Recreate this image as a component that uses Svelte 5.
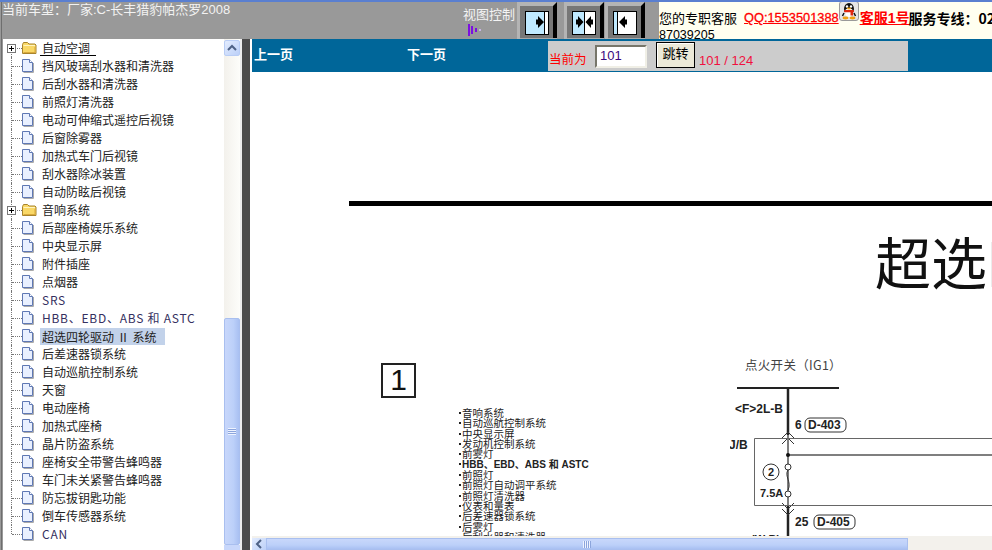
<script>
  const rows = [
    ['自动空调', 'folder'], ['挡风玻璃刮水器和清洗器'], ['后刮水器和清洗器'], ['前照灯清洗器'],
    ['电动可伸缩式遥控后视镜'], ['后窗除雾器'], ['加热式车门后视镜'], ['刮水器除冰装置'], ['自动防眩后视镜'],
    ['音响系统', 'folder'], ['后部座椅娱乐系统'], ['中央显示屏'], ['附件插座'], ['点烟器'], ['SRS', 'latin'],
    ['HBB、EBD、ABS 和 ASTC', 'latin'], ['超选四轮驱动 II 系统', 'selected'], ['后差速器锁系统'], ['自动巡航控制系统'],
    ['天窗'], ['电动座椅'], ['加热式座椅'], ['晶片防盗系统'], ['座椅安全带警告蜂鸣器'],
    ['车门未关紧警告蜂鸣器'], ['防忘拔钥匙功能'], ['倒车传感器系统'], ['CAN', 'latin']
  ];
  const list = ['音响系统', '自动巡航控制系统', '中央显示屏', '发动机控制系统', '前雾灯', 'HBB、EBD、ABS 和 ASTC', '前照灯', '前照灯自动调平系统', '前照灯清洗器', '仪表和量表', '后差速器锁系统', '后雾灯', '后刮水器和清洗器'];
</script>

{#snippet viewBtn(line, arrows)}
  <svg class="viewbtn" width="40" height="37" viewBox="0 0 40 37">
    <rect width="40" height="37" fill="#a8a8a8" />
    <polygon points="0,0 40,0 36,4 3,4 3,37 0,37" fill="#b4b4b4" />
    <rect x="3" y="4" width="33" height="32" fill="#777" />
    <polygon points="36,4 40,0 40,36 36,36" fill="#000" />
    <rect x="8.5" y="9.5" width="23" height="23" fill="#fff" stroke="#000" />
    <rect x="9" y="10" width={line - 9} height="22" fill="#bfe9ff" />
    <line x1={line + 0.5} y1="10" x2={line + 0.5} y2="32" stroke="#000" />
    {#each arrows as a}
      <polygon points={a} fill="#000" />
    {/each}
  </svg>
{/snippet}

<div class="app">
  <header class="top">
    <div class="model">当前车型：厂家:C-长丰猎豹帕杰罗2008</div>
    <div class="view">
      <div class="view-label">视图控制</div>
      <svg class="wave" width="18" height="14" viewBox="0 0 18 14">
        <rect x="1" y="1" width="2" height="12" fill="#7b10e0" />
        <rect x="4" y="3" width="2" height="8" fill="#7b10e0" />
        <rect x="8" y="5" width="2" height="4" fill="#7b10e0" />
        <rect x="12" y="6" width="2" height="2" fill="#c9b6e6" />
      </svg>
    </div>
    <div class="btns">
      {@render viewBtn(27, ['19,17.5 21,17.5 21,14 27,20 21,26 21,22.5 19,22.5'])}
      {@render viewBtn(20, ['12,17.5 14,17.5 14,14 19.5,20 14,26 14,22.5 12,22.5', '29,17.5 27,17.5 27,14 21.5,20 27,26 27,22.5 29,22.5'])}
      {@render viewBtn(12, ['22,17.5 20,17.5 20,14 14,20 20,26 20,22.5 22,22.5'])}
    </div>
    <div class="service">
      <div class="line"><span class="plain">您的专职客服</span><a class="qq" href="#qq">QQ:1553501388</a><svg class="penguin" width="20" height="20" viewBox="0 0 20 20">
        <rect x="0.5" y="0.5" width="19" height="19" rx="2.5" fill="#e6e6e6" stroke="#9a9a9a" />
        <ellipse cx="10" cy="8" rx="5" ry="6" fill="#111" />
        <ellipse cx="10" cy="11.5" rx="4" ry="4.5" fill="#fff" />
        <circle cx="8" cy="5.5" r="1.2" fill="#fff" />
        <circle cx="12" cy="5.5" r="1.2" fill="#fff" />
        <ellipse cx="10" cy="7.5" rx="2" ry="1" fill="#f0a010" />
        <rect x="5" y="9" width="10" height="2.2" rx="1" fill="#e02810" />
        <rect x="11.5" y="10.5" width="2.6" height="4" fill="#e02810" />
        <path d="M5 12 L3.5 15 M15 12 L16.5 15" stroke="#111" stroke-width="1.5" />
        <ellipse cx="6.5" cy="17" rx="3" ry="1.4" fill="#f0a010" />
        <ellipse cx="13.5" cy="17" rx="3" ry="1.4" fill="#f0a010" />
      </svg><a class="kefu" href="#kf">客服1号</a><b>服务专线：02</b></div>
      <div class="tel">87039205</div>
    </div>
  </header>

  <div class="body">
    <aside class="side">
      <div class="tree">
        {#each rows as [label, kind], i}
          <div class="row" class:last={i === rows.length - 1} class:first={i === 0}>
            {#if kind === 'folder'}
              <span class="plus"></span>
              <svg class="ico" width="16" height="14" viewBox="0 0 16 14">
                <path d="M.5 3.5 L1.5 1.5 H5.5 L7 3 H13 L14 4 V12.5 H.5 Z" fill="#f9d867" stroke="#a8842c" />
                <path d="M1.5 4.5 H13" stroke="#fff4c0" />
                <path d="M1.5 11.5 H13 V6" stroke="#d9a93c" fill="none" />
              </svg>
            {:else}
              <svg class="ico" width="16" height="14" viewBox="0 0 16 14">
                <path d="M.5 .5 H7.5 L10.5 3.5 V12.5 H.5 Z" fill="#e9f0ff" stroke="#5f78b4" />
                <path d="M7.5 .5 V3.5 H10.5" fill="#fff" stroke="#5f78b4" />
                <path d="M1.5 13.5 H11.5 V4" stroke="#aaa" fill="none" />
              </svg>
            {/if}
            <span class="label" class:sel={kind === 'selected'} class:latin={kind === 'latin'} class:open={i === 0}>{label}</span>
          </div>
        {/each}
      </div>
      <div class="vscroll">
        <div class="up">
          <svg width="12" height="8" viewBox="0 0 12 8"><path d="M2 6 L6 2 L10 6" stroke="#4d6185" stroke-width="2" fill="none" /></svg>
        </div>
        <div class="vtrack"></div>
        <div class="vthumb"><span class="grip"></span></div>
        <div class="down"></div>
      </div>
    </aside>
    <div class="split"></div>
    <main class="main">
      <div class="bar">
        <div class="nav">
          <a href="#prev">上一页</a>
          <a href="#next">下一页</a>
        </div>
        <div class="jump">
          <span class="cur">当前为</span>
          <input class="page" value="101" />
          <button class="go">跳转</button>
          <span class="count">101 / 124</span>
        </div>
      </div>
      <div class="doc">
        <div class="rule"></div>
        <div class="title">超选四轮驱动</div>
        <div class="one">1</div>
        <ul class="list">
          {#each list as t}
            <li class:hb={t.startsWith('HBB')}>{t}</li>
          {/each}
        </ul>
        <svg class="diagram" width="262" height="200" viewBox="0 0 262 200">
          <text x="15" y="20" class="t13">点火开关（IG1）</text>
          <line x1="7" y1="38" x2="109" y2="38" stroke="#222" stroke-width="2" />
          <line x1="58" y1="38" x2="58" y2="85" stroke="#222" stroke-width="2.5" />
          <line x1="58" y1="85" x2="58" y2="155" stroke="#555" stroke-width="1.5" />
          <line x1="58" y1="155" x2="58" y2="200" stroke="#222" stroke-width="2.5" />
          <text x="5" y="63" class="t12">&lt;F&gt;2L-B</text>
          <text x="65" y="79" class="t12">6</text>
          <rect x="75" y="68" width="41" height="14" rx="5" fill="none" stroke="#333" />
          <text x="78" y="79" class="t12">D-403</text>
          <path d="M52 88 L58 82 L64 88 M52 94 L58 88 L64 94 M52 153 L58 159 L64 153 M52 159 L58 165 L64 159" stroke="#333" fill="none" />
          <text x="-1" y="99" class="t12">J/B</text>
          <path d="M262 88.5 H24.5 V155.5 H262" stroke="#666" fill="none" />
          <line x1="58" y1="105" x2="262" y2="105" stroke="#555" stroke-width="1.5" />
          <circle cx="58" cy="105" r="2" fill="#111" />
          <circle cx="58" cy="117" r="3" fill="#fff" stroke="#333" />
          <path d="M58 120 C54 126 62 132 58 140" stroke="#333" fill="none" />
          <circle cx="58" cy="144" r="3" fill="#fff" stroke="#333" />
          <circle cx="41" cy="122" r="8" fill="none" stroke="#333" />
          <text x="38" y="126" class="t11">2</text>
          <text x="30" y="147" class="t11">7.5A</text>
          <text x="65" y="176" class="t12">25</text>
          <rect x="84" y="165" width="41" height="14" rx="5" fill="none" stroke="#333" />
          <text x="87" y="176" class="t12">D-405</text>
          <text x="21" y="193" class="t11">(W-B)</text>
        </svg>
      </div>
      <div class="hscroll">
        <div class="left">
          <svg width="8" height="10" viewBox="0 0 8 10"><path d="M6 1 L2 5 L6 9" stroke="#4d6185" stroke-width="2" fill="none" /></svg>
        </div>
        <div class="hthumb"><span class="hgrip"></span></div>
        <div class="htrack"></div>
      </div>
    </main>
  </div>
</div>

<style>
  :global(body) { margin: 0; background: #999; }
  .app {
    width: 992px;
    height: 550px;
    overflow: hidden;
    display: grid;
    grid-template-rows: 39px 1fr;
    font-family: "Noto Sans CJK SC", "Liberation Sans", sans-serif;
    font-size: 12px;
  }
  .top {
    display: flex;
    background: linear-gradient(90deg, #999 0 1px, #6e6e6e 1px 2px, #999 2px);
    border-top: 2px solid #5a7fd0;
    box-sizing: border-box;
    overflow: hidden;
    color: #fff;
  }
  .model {
    width: 461px;
    padding-left: 2px;
    font-size: 13px;
    line-height: 15px;
    color: #f2f2f2;
    font-family: "Liberation Sans", "Noto Sans CJK SC", sans-serif;
  }
  .view { width: 54px; padding-top: 3px; }
  .view-label { font-size: 13px; line-height: 17px; white-space: nowrap; color: #f4f4f4; }
  .wave { display: block; margin: 1px 0 0 4px; }
  .btns { display: flex; gap: 7px; width: 142px; }
  .viewbtn { display: block; flex: none; }
  .btns .viewbtn:last-child { margin-left: -6px; }
  .service {
    flex: 1;
    min-width: 0;
    background: #fffff0;
    color: #000;
    font-size: 13px;
    white-space: nowrap;
    overflow: hidden;
  }
  .line { display: flex; align-items: flex-start; height: 26px; }
  .plain { margin: 7px 7px 0 0; line-height: 18px; }
  .qq, .kefu {
    color: #f00;
    text-decoration: underline;
    font-family: "Liberation Sans", "Noto Sans CJK SC", sans-serif;
    line-height: 18px;
    margin-top: 7px;
  }
  .kefu { font-size: 14px; font-weight: 700; margin-left: 1px; }
  .qq { font-size: 12.8px; -webkit-text-stroke: 0.3px #f00; }
  .penguin { display: block; flex: none; margin-top: -1px; }
  .line b { font-size: 14px; line-height: 18px; margin-top: 7px; margin-left: -1px; }
  .tel { line-height: 14px; font-size: 12.5px; font-family: "Liberation Sans", sans-serif; }

  .body {
    display: flex;
    min-height: 0;
    padding-left: 3px;
    background: linear-gradient(90deg, #999 0 1px, #6e6e6e 1px 2px, #999 2px);
  }
  .side { width: 237px; background: #fff; display: flex; flex: none; min-height: 0; }
  .tree { width: 221px; flex: none; overflow: hidden; }
  .row {
    height: 18px;
    display: flex;
    align-items: center;
    position: relative;
    padding-left: 19px;
    color: #222;
    white-space: nowrap;
  }
  .row::before {
    content: "";
    position: absolute;
    left: 8px;
    top: 0;
    bottom: 0;
    border-left: 1px dotted #777;
  }
  .row.last::before { bottom: 9px; }
  .row.first::before { top: 9px; }
  .row::after {
    content: "";
    position: absolute;
    left: 9px;
    width: 10px;
    top: 9px;
    border-top: 1px dotted #777;
  }
  .plus {
    position: absolute;
    left: 4px;
    top: 5px;
    width: 9px;
    height: 9px;
    box-sizing: border-box;
    border: 1px solid #777;
    background:
      linear-gradient(#000, #000) center / 5px 1px no-repeat,
      linear-gradient(#000, #000) center / 1px 5px no-repeat,
      #fff;
    z-index: 1;
  }
  .ico { flex: none; position: relative; z-index: 1; }
  .label { margin-left: 2px; padding: 0 2px; line-height: 16px; }
  .label.latin { letter-spacing: .75px; color: #353060; }
  .label.sel { background: #c2d2ea; padding-right: 9px; line-height: 17px; word-spacing: 3px; }
  .label.open { border-bottom: 1px solid #000; padding-right: 6px; line-height: 15px; }

  .vscroll { width: 16px; flex: none; background: linear-gradient(90deg, #f3f1ec, #fdfdfa); display: flex; flex-direction: column; }
  .up {
    height: 16px;
    margin: 1px 0;
    background: linear-gradient(135deg, #e3ecfe, #bcd0f8);
    border: 1px solid #b9cdf5;
    border-radius: 2px;
    box-sizing: border-box;
    display: flex;
    align-items: center;
    justify-content: center;
    flex: none;
  }
  .vtrack { height: 261px; flex: none; }
  .vthumb {
    height: 227px;
    flex: none;
    background: linear-gradient(90deg, #c8d7fb, #bcd0f9 60%, #a9c0f2);
    border: 1px solid #a9bfef;
    box-sizing: border-box;
    border-radius: 2px;
    display: flex;
    align-items: center;
    justify-content: center;
  }
  .grip {
    width: 8px;
    height: 7px;
    background: repeating-linear-gradient(#eef3ff 0 1px, #8ca5dc 1px 2px);
  }
  .down { height: 16px; flex: none; background: #c8d7fb; }
  .split {
    width: 12px;
    flex: none;
    box-sizing: border-box;
    background: #4d4d4d;
    border-left: 2px solid #eee;
    border-right: 2px solid #fff;
  }
  .main { flex: 1; min-width: 0; display: flex; flex-direction: column; background: #fff; }
  .bar { height: 33px; background: #006699; display: flex; flex: none; color: #fff; }
  .nav { width: 296px; display: flex; gap: 114px; padding: 6px 0 0 2px; box-sizing: border-box; font-weight: 700; font-size: 13px; line-height: 18px; }
  .nav a { color: #fff; text-decoration: none; }
  .jump { width: 360px; height: 30px; margin-top: 2px; background: #ccc; display: flex; align-items: flex-start; }
  .cur { color: #f00; font-size: 12.5px; margin: 10px 9px 0 1px; line-height: 16px; width: 37px; white-space: nowrap; }
  .page {
    width: 52px;
    height: 23px;
    box-sizing: border-box;
    border: 2px solid;
    border-color: #77766a #f0efe6 #f0efe6 #77766a;
    margin-top: 4px;
    padding: 0 3px 2px;
    font: 13px "Liberation Sans", sans-serif;
    color: #3a0a80;
    background: #fff;
    outline: none;
  }
  .go {
    width: 39px;
    height: 26px;
    margin: 1px 0 0 9px;
    padding: 0 0 5px;
    box-sizing: border-box;
    background: #ece9d8;
    border: 1px solid #000;
    box-shadow: inset 1px 1px 0 #fff;
    font: 13px "Noto Sans CJK SC", sans-serif;
    color: #000;
  }
  .count { color: #f01040; margin: 12px 0 0 4px; font: 13px/15px "Liberation Sans", sans-serif; }

  .doc { flex: 1; min-height: 0; position: relative; overflow: hidden; background: #fff; }
  .rule { position: absolute; left: 97px; right: 0; top: 129px; height: 5px; background: #000; }
  .title {
    position: absolute;
    left: 623px;
    top: 148px;
    font-size: 56px;
    line-height: 80px;
    color: #111;
    white-space: nowrap;
  }
  .one {
    position: absolute;
    left: 129px;
    top: 291px;
    width: 35px;
    height: 35px;
    box-sizing: border-box;
    border: 2px solid #222;
    font: 30px/30px "Liberation Sans", sans-serif;
    text-align: center;
    color: #111;
  }
  .list {
    position: absolute;
    left: 207px;
    top: 336px;
    margin: 0;
    padding: 0;
    list-style: none;
    font-size: 10.5px;
    line-height: 10.35px;
    color: #222;
    white-space: nowrap;
  }
  .list li::before { content: ""; display: inline-block; width: 2px; height: 2px; background: #222; margin-right: 1px; vertical-align: 3px; }
  .list .hb { font: 700 10px/10.35px "Liberation Sans", "Noto Sans CJK SC", sans-serif; color: #222; }
  .diagram { position: absolute; left: 478px; top: 278px; display: block; }
  .t13 { font-size: 12.5px; fill: #444; letter-spacing: .3px; }
  .t12 { font: 700 12px "Liberation Sans", sans-serif; fill: #222; }
  .t11 { font: 700 11px "Liberation Sans", sans-serif; fill: #222; }

  .hscroll { height: 14px; box-sizing: border-box; padding-top: 2px; flex: none; display: flex; background: #f3f1ec; }
  .left {
    width: 14px;
    background: linear-gradient(135deg, #e3ecfe, #bcd0f8);
    display: flex;
    align-items: center;
    justify-content: center;
    flex: none;
  }
  .hthumb {
    width: 642px;
    flex: none;
    background: linear-gradient(#c8d7fb, #bcd0f9 60%, #a9c0f2);
    border: 1px solid #a9bfef;
    box-sizing: border-box;
    display: flex;
    align-items: center;
    justify-content: center;
  }
  .hgrip { width: 8px; height: 7px; background: repeating-linear-gradient(90deg, #eef3ff 0 1px, #8ca5dc 1px 2px); }
  .htrack { flex: 1; }
</style>
